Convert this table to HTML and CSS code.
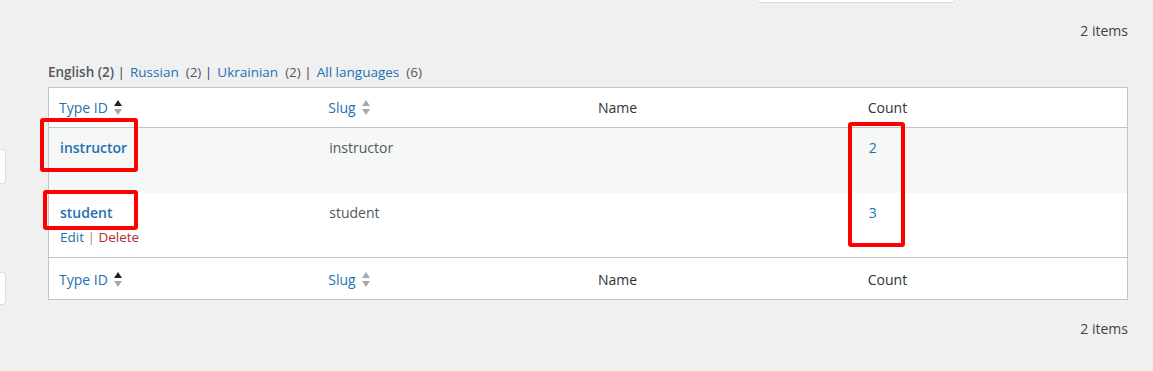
FILE: index.html
```html
<!DOCTYPE html>
<html>
<head>
<meta charset="utf-8">
<link rel="stylesheet" href="styles.css">
</head>
<body>
<div class="page">
  <div class="side">
    <div class="stub stub-a"></div>
    <div class="stub stub-b"></div>
  </div>
  <div class="main">
    <div class="search-stub"></div>
    <div class="tablenav top"><span class="num">2 items</span></div>
    <ul class="langs">
      <li><strong>English (2)</strong> |</li>
      <li><a href="#">Russian</a><span class="count">(2)</span> |</li>
      <li><a href="#">Ukrainian</a><span class="count">(2)</span> |</li>
      <li><a href="#">All languages</a><span class="count">(6)</span></li>
    </ul>
    <table class="list">
      <thead>
        <tr>
          <th><a href="#" class="sort">Type ID <svg class="arrows" width="8" height="18" viewBox="0 0 8 18"><path d="M0 7L4 1L8 7Z" fill="#1d2327"/><path d="M0 10L4 16L8 10Z" fill="#a7aaad"/></svg></a></th>
          <th><a href="#" class="sort">Slug <svg class="arrows" width="8" height="18" viewBox="0 0 8 18"><path d="M0 7L4 1L8 7Z" fill="#a7aaad"/><path d="M0 10L4 16L8 10Z" fill="#a7aaad"/></svg></a></th>
          <th>Name</th>
          <th>Count</th>
        </tr>
      </thead>
      <tbody>
        <tr class="alt">
          <td class="title"><a href="#" class="row-title">instructor</a></td>
          <td>instructor</td>
          <td></td>
          <td><a href="#">2</a></td>
        </tr>
        <tr>
          <td class="title"><a href="#" class="row-title">student</a>
            <div class="row-actions"><a href="#">Edit</a> | <a href="#" class="delete">Delete</a></div>
          </td>
          <td>student</td>
          <td></td>
          <td><a href="#">3</a></td>
        </tr>
      </tbody>
      <tfoot>
        <tr>
          <th><a href="#" class="sort">Type ID <svg class="arrows" width="8" height="18" viewBox="0 0 8 18"><path d="M0 7L4 1L8 7Z" fill="#1d2327"/><path d="M0 10L4 16L8 10Z" fill="#a7aaad"/></svg></a></th>
          <th><a href="#" class="sort">Slug <svg class="arrows" width="8" height="18" viewBox="0 0 8 18"><path d="M0 7L4 1L8 7Z" fill="#a7aaad"/><path d="M0 10L4 16L8 10Z" fill="#a7aaad"/></svg></a></th>
          <th>Name</th>
          <th>Count</th>
        </tr>
      </tfoot>
    </table>
    <div class="tablenav bottom"><span class="num">2 items</span></div>
  </div>
  <div class="mark mark-1"></div>
  <div class="mark mark-2"></div>
  <div class="mark mark-3"></div>
</div>
</body>
</html>
```

FILE: styles.css
```css
* { box-sizing: border-box; }
html, body { margin: 0; padding: 0; }
body {
  background: #f0f0f1;
  font-family: "Open Sans", "Noto Sans", sans-serif;
  font-size: 14px;
  color: #3c434a;
  width: 1153px;
  height: 371px;
  overflow: hidden;
}
a { color: #2271b1; text-decoration: none; }
.page {
  position: relative;
  display: flex;
  height: 371px;
}
.side {
  width: 6px;
  display: flex;
  flex-direction: column;
}
.stub {
  width: 6px;
  background: #fff;
  border: 1px solid #dcdcde;
  border-left: none;
  border-radius: 0 4px 4px 0;
}
.stub-a { margin-top: 149px; height: 35px; }
.stub-b { margin-top: 88px; height: 33px; }
.main {
  margin-left: 42px;
  width: 1080px;
  display: flex;
  flex-direction: column;
}
.search-stub {
  margin-left: 709px;
  width: 198px;
  height: 3px;
  background: #fff;
  border: 1px solid #dcdcde;
  border-top: none;
  border-radius: 0 0 3px 3px;
}
.tablenav {
  display: flex;
  justify-content: flex-end;
  line-height: 20px;
  font-size: 14px;
  color: #3c434a;
}
.tablenav.top { margin-top: 18px; }
.tablenav.bottom { margin-top: 19px; }
.langs {
  list-style: none;
  margin: 21px 0 0;
  padding: 0;
  display: flex;
  font-size: 13.5px;
  line-height: 20px;
  color: #3c434a;
}
.langs li { white-space: pre; margin-right: 5px; }
.langs strong { font-weight: 600; color: #50575e; }
.langs .count { color: #50575e; margin-left: 7px; }
.list {
  margin-top: 5px;
  width: 1080px;
  table-layout: fixed;
  border-collapse: collapse;
  background: #fff;
  border: 1px solid #c3c4c7;
}
.list th {
  text-align: left;
  font-weight: 400;
  height: 40px;
  padding: 0 10px;
  color: #2c3338;
  vertical-align: middle;
  line-height: 20px;
}
.list thead th { border-bottom: 1px solid #c3c4c7; }
.list tfoot th { border-top: 1px solid #c3c4c7; height: 42px; padding-top: 2px; }
.sort { display: inline-flex; align-items: center; gap: 6px; }
.arrows { display: block; margin-top: 1px; }
.list td {
  height: 65px;
  vertical-align: top;
  padding: 10px 10px 0 11px;
  line-height: 20px;
  color: #50575e;
}
.list tr.alt td { background: #f6f7f7; }
.row-title { font-weight: 600; }
.row-actions {
  padding-top: 5px;
  font-size: 13.5px;
  line-height: 18px;
  color: #8c8f94;
}
.row-actions .delete { color: #b32d2e; }
.mark {
  position: absolute;
  border: 4px solid #ff0000;
  border-radius: 3px;
}
.mark-1 { left: 40px; top: 118px; width: 98px; height: 54px; }
.mark-2 { left: 43px; top: 190px; width: 95px; height: 40px; }
.mark-3 { left: 848px; top: 122px; width: 57px; height: 125px; }
```
